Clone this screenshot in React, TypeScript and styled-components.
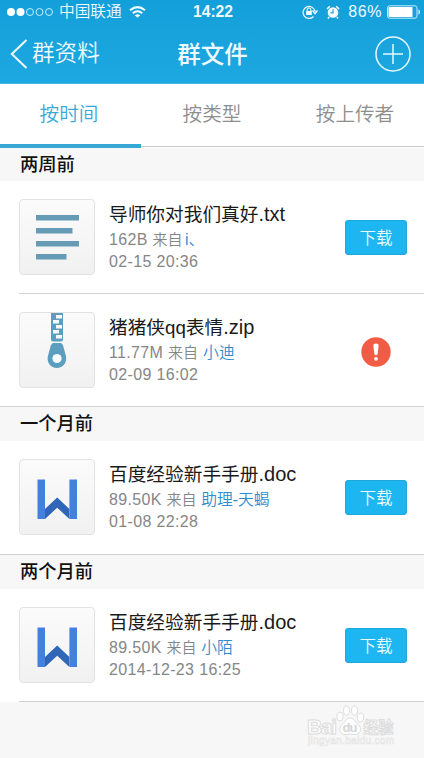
import React from "react";
import styled, { createGlobalStyle } from "styled-components";

const GlobalStyle = createGlobalStyle`
  * { box-sizing: border-box; }
  html, body { margin: 0; padding: 0; background: #f7f7f7; }
  body {
    font-family: "Liberation Sans", "Noto Sans CJK SC", sans-serif;
    -webkit-font-smoothing: antialiased;
  }
`;

const Screen = styled.div`
  position: relative;
  width: 424px;
  height: 758px;
  overflow: hidden;
  background: #f7f7f7;
  display: flex;
  flex-direction: column;
`;

const Header = styled.header`
  height: 84px;
  flex: none;
  color: #effaff;
  background: linear-gradient(#139fd9, #1ea8e1);
  border-bottom: 1px solid #45b5e2;
`;

const StatusBar = styled.div`
  height: 24px;
  display: grid;
  grid-template-columns: 1fr auto 1fr;
  align-items: center;
  padding: 0 3px 0 7px;
`;

const StatusGroup = styled.div<{ $end?: boolean }>`
  display: flex;
  align-items: center;
  justify-content: ${(p) => (p.$end ? "flex-end" : "flex-start")};
`;

const Carrier = styled.span`
  margin: 0 7px 0 6px;
  font-size: 15.7px;
  line-height: 24px;
  font-weight: 350;
`;

const Clock = styled.span`
  margin-right: 2px;
  font-size: 15.7px;
  line-height: 24px;
  font-weight: 700;
`;

const Percent = styled.span`
  margin: 0 5px 0 8px;
  font-size: 16px;
  line-height: 24px;
  letter-spacing: 0.6px;
`;

const NavBar = styled.div`
  height: 59px;
  display: grid;
  grid-template-columns: 1fr auto 1fr;
  align-items: center;
  padding: 0 13px 0 10px;
`;

const BackButton = styled.button`
  display: flex;
  align-items: center;
  gap: 4px;
  padding: 0;
  border: 0;
  background: none;
  color: inherit;
  font: 350 22.6px/32px "Liberation Sans", "Noto Sans CJK SC", sans-serif;
`;

const PageTitle = styled.h1`
  margin: 0;
  font-size: 23.5px;
  line-height: 34px;
  font-weight: 500;
  padding: 2px 0 0 4px;
`;

const AddButton = styled.button`
  justify-self: end;
  display: flex;
  padding: 0;
  border: 0;
  background: none;
  color: inherit;
`;

const Tabs = styled.nav`
  height: 64px;
  flex: none;
  display: grid;
  grid-template-columns: 141px 142px 1fr;
  background: #fff;
`;

const Tab = styled.button<{ $active?: boolean; $shift?: number }>`
  padding: ${(p) => (p.$active ? "0 3px 0 0" : "0 0 2px")};
  padding-left: ${(p) => p.$shift ?? 0}px;
  border: 0;
  border-bottom: ${(p) => (p.$active ? "4px solid #37a7d6" : "1px solid #c9c9c9")};
  margin-bottom: ${(p) => (p.$active ? "0" : "1px")};
  background: none;
  color: ${(p) => (p.$active ? "#38a9d8" : "#8e8e8e")};
  font: 350 19.6px/30px "Liberation Sans", "Noto Sans CJK SC", sans-serif;
`;

const SectionTitle = styled.h2<{ $height: number }>`
  flex: none;
  height: ${(p) => p.$height}px;
  margin: 0;
  padding-left: 20px;
  color: #111;
  background: #f7f7f7;
  font-size: 18.3px;
  line-height: 33px;
  font-weight: 500;
`;

const Row = styled.article<{ $height: number; $inset?: boolean }>`
  flex: none;
  height: ${(p) => p.$height}px;
  display: grid;
  grid-template-columns: 76px 1fr 62px;
  column-gap: 14px;
  padding: 18px 17px 0 19px;
  background:
    linear-gradient(#d2d2d2, #d2d2d2) ${(p) => (p.$inset ? "19px" : "0")} 100% / 100% 1px no-repeat,
    #fff;
`;

const FileTile = styled.div`
  width: 76px;
  height: 76px;
  border: 1px solid #e2e2e2;
  border-radius: 4px;
  overflow: hidden;
  background: linear-gradient(#fbfbfb, #f1f1f1);
  svg { display: block; margin: -1px; }
`;

const Info = styled.div`
  display: flex;
  flex-direction: column;
  white-space: nowrap;
`;

const FileName = styled.div`
  height: 30px;
  font-size: 18.7px;
  line-height: 31px;
  color: #1a1a1a;
`;

const Extension = styled.span`
  font-size: 20px;
`;

const Meta = styled.div`
  height: 22px;
  line-height: 22px;
  font-size: 16px;
  letter-spacing: 0.35px;
  color: #868686;
`;

const From = styled.span`
  font-size: 15px;
  font-weight: 350;
  letter-spacing: 0;
`;

const Sender = styled.span<{ $gap: number }>`
  margin-left: ${(p) => p.$gap}px;
  font-size: 15.8px;
  letter-spacing: 0;
  font-weight: 350;
  color: #2f8bd0;
`;

const Action = styled.div<{ $top: number }>`
  display: flex;
  justify-content: center;
  align-items: flex-start;
  padding-top: ${(p) => p.$top}px;
`;

const Download = styled.button`
  width: 62px;
  height: 35px;
  padding: 0;
  border: 0;
  border-radius: 4px;
  box-shadow: inset 0 0 0 1px #20a8de;
  background: #1eb6f1;
  color: #e8faff;
  font: 350 16.5px/34px "Liberation Sans", "Noto Sans CJK SC", sans-serif;
`;

const Watermark = styled.div`
  position: absolute;
  left: 305px;
  top: 703px;
  width: 92px;
  height: 44px;
  svg { display: block; }
`;

const TextIcon = () => (
  <svg width="76" height="76" viewBox="0 0 76 76" fill="#669bb5">
    <path d="M17 16h43v5.5H17zM17 29h36.5v5.5H17zM17 42h43v5.5H17zM17 55h30.5v5.5H17z" />
  </svg>
);

const ZipIcon = () => (
  <svg width="76" height="76" viewBox="0 0 76 76">
    <path d="M32 0h12v27.5q0 2-2 2h-8q-2 0-2-2z" fill="#5c9ebf" />
    <path d="M37 3h6v3.5h-6zM34 8h6v3.5h-6zM37 13h6v3.5h-6zM34 18h6v3.5h-6zM37 23h6v3.5h-6z" fill="#f8fcff" />
    <path d="M35.5 31h5c3 0 3.5 2 4.3 5l2.1 8c1.5 6.500-3 12-9 12s-10.500-5.500-9-12l2.200-8c.8-3 1.400-5 4.400-5z" fill="#5c9ebf" />
    <circle cx="38" cy="46.500" r="4.600" fill="#f8fbfd" />
  </svg>
);

const DocIcon = () => (
  <svg width="76" height="76" viewBox="0 0 76 76">
    <path d="M26 50 38.200 38.500 50.400 50v10L38.200 48.700 26 60z" fill="#2f66b8" />
    <path d="M18.500 20.500H26V60h-7.500zM50.400 20.500H58V60h-7.600z" fill="#4381dc" />
  </svg>
);

const Warning = () => (
  <svg width="30" height="30" viewBox="0 0 30 30" aria-label="warning">
    <circle cx="15" cy="15" r="14.700" fill="#f15c46" />
    <path d="M15 6.500c1.700 0 2.700.8 2.600 2.300l-.9 8.200c-.2 1.500-3.200 1.500-3.400 0l-.9-8.200c-.1-1.500.9-2.300 2.600-2.300z" fill="#fff" />
    <circle cx="15" cy="21.800" r="1.900" fill="#fff" />
  </svg>
);

const SignalDots = () => (
  <svg width="46" height="10" viewBox="0 0 46 10">
    {[4, 13.500, 23, 32.500, 42].map((cx, i) => (
      <circle key={cx} cx={cx} cy="5" r={i < 2 ? 4 : 3.500} fill={i < 2 ? "#fff" : "none"} stroke={i < 2 ? "none" : "#c9ecfa"} />
    ))}
  </svg>
);

const WifiIcon = () => (
  <svg width="17" height="12" viewBox="0 0 17 12" fill="none" stroke="#f2fbff" strokeWidth="2">
    <path d="M1 4.300Q8.500-2 16 4.300M3.700 7.200q4.800-4 9.600 0" />
    <path d="M8.500 11.800 5.700 9.200q2.800-2 5.600 0z" fill="#f2fbff" stroke="none" />
  </svg>
);

const LockIcon = () => (
  <svg width="16" height="14" viewBox="0 0 16 14" fill="none" stroke="#eaf9ff" strokeWidth="1.200">
    <path d="M11.500 11.500A6 6 0 1 1 13 6.500M10.800 6h4.400L13 8.700z" />
    <path d="M5.200 6V4.800a1.800 1.800 0 0 1 3.600 0V6" />
    <path d="M4.200 6h5.600v4H4.200z" fill="#fff" stroke="none" />
  </svg>
);

const AlarmIcon = () => (
  <svg width="14" height="14" viewBox="0 0 14 14">
    <circle cx="7" cy="7.500" r="5.300" fill="#f6fdff" />
    <path d="M1 4 3.800 1.300M13 4l-2.800-2.700M3 12l-1 1.500M11 12l1 1.500" stroke="#f6fdff" strokeWidth="1.500" />
    <path d="M7 4.300v3.500H4.500" fill="none" stroke="#229fd3" strokeWidth="1.200" />
  </svg>
);

const BatteryIcon = () => (
  <svg width="34" height="14" viewBox="0 0 34 14">
    <rect x=".5" y=".8" width="29.500" height="12.400" rx="2" fill="none" stroke="#c6ecfa" />
    <rect x="1.500" y="2" width="24" height="10" rx=".7" fill="#fff" />
    <path d="M31.500 4.500c2 .5 2 4.500 0 5z" fill="#eaf9ff" />
  </svg>
);

const BaiduMark = () => (
  <svg width="92" height="44" viewBox="0 0 92 44" fontFamily='"Liberation Sans", "Noto Sans CJK SC", sans-serif'>
    <g fill="#fff" stroke="#dcdcdc" strokeWidth="1">
      <ellipse cx="35" cy="13.500" rx="3" ry="4.300" />
      <ellipse cx="41.500" cy="7.500" rx="3" ry="4.500" />
      <ellipse cx="49.500" cy="7.500" rx="3" ry="4.500" />
      <ellipse cx="55.500" cy="14.500" rx="3.200" ry="4.300" />
      <path d="M45 15c4 0 5 4 8 6.500 5 4 2 11-4 10-3-.7-5-.7-8 0-6 1-8-6-4-10 3-2.500 4-6.500 8-6.500z" />
      <text x="2" y="31" fontSize="21" fontWeight="700" textLength="30">Bai</text>
      <text x="58.500" y="30" fontSize="16" fontWeight="700" textLength="30" lengthAdjust="spacingAndGlyphs">经验</text>
    </g>
    <text x="37.500" y="29" fontSize="13" fontWeight="700" textLength="15" fill="#d5d5d5">du</text>
    <text x="3" y="41" fontSize="10" textLength="86" fill="#fff" stroke="#e4e4e4" strokeWidth=".6">jingyan.baidu.com</text>
  </svg>
);

type FileEntry = {
  kind: "text" | "zip" | "doc";
  name: string;
  ext: string;
  size: string;
  sender: string;
  gap: number;
  time: string;
  height: number;
  inset?: boolean;
  failed?: boolean;
};

const sections: { title: string; height: number; files: FileEntry[] }[] = [
  {
    title: "两周前",
    height: 33,
    files: [
      { kind: "text", name: "导师你对我们真好", ext: ".txt", size: "162B", sender: "i、", gap: 2.5, time: "02-15 20:36", height: 113, inset: true },
      { kind: "zip", name: "猪猪侠qq表情", ext: ".zip", size: "11.77M", sender: "小迪", gap: 5, time: "02-09 16:02", height: 113, failed: true },
    ],
  },
  {
    title: "一个月前",
    height: 34,
    files: [{ kind: "doc", name: "百度经验新手手册", ext: ".doc", size: "89.50K", sender: "助理-天蝎", gap: 4.5, time: "01-08 22:28", height: 114 }],
  },
  {
    title: "两个月前",
    height: 34,
    files: [{ kind: "doc", name: "百度经验新手手册", ext: ".doc", size: "89.50K", sender: "小陌", gap: 4.5, time: "2014-12-23 16:25", height: 113, inset: true }],
  },
];

const icons = { text: TextIcon, zip: ZipIcon, doc: DocIcon };

const FileRow = ({ file }: { file: FileEntry }) => {
  const Icon = icons[file.kind];
  return (
    <Row $height={file.height} $inset={file.inset}>
      <FileTile><Icon /></FileTile>
      <Info>
        <FileName>{file.name}<Extension>{file.ext}</Extension></FileName>
        <Meta>
          {file.size} <From>来自</From>
          <Sender $gap={file.gap}>{file.sender}</Sender>
        </Meta>
        <Meta>{file.time}</Meta>
      </Info>
      <Action $top={file.failed ? 25 : 21}>{file.failed ? <Warning /> : <Download>下载</Download>}</Action>
    </Row>
  );
};

export default function App() {
  return (
    <Screen lang="zh-CN">
      <GlobalStyle />
      <Header>
        <StatusBar>
          <StatusGroup>
            <SignalDots />
            <Carrier>中国联通</Carrier>
            <WifiIcon />
          </StatusGroup>
          <Clock>14:22</Clock>
          <StatusGroup $end>
            <LockIcon />
            <svg width="8" height="1" />
            <AlarmIcon />
            <Percent>86%</Percent>
            <BatteryIcon />
          </StatusGroup>
        </StatusBar>
        <NavBar>
          <BackButton>
            <svg width="18" height="30" viewBox="0 0 18 30" fill="none" stroke="#effaff" strokeWidth="2">
              <path d="M16.500 1 1.800 15l14.700 14" />
            </svg>
            群资料
          </BackButton>
          <PageTitle>群文件</PageTitle>
          <AddButton aria-label="add">
            <svg width="36" height="36" viewBox="0 0 36 36" fill="none" stroke="#e6f8ff" strokeWidth="1.500">
              <circle cx="18" cy="18" r="17" />
              <path d="M18 8v20M8 18h20" />
            </svg>
          </AddButton>
        </NavBar>
      </Header>
      <Tabs>
        <Tab $active>按时间</Tab>
        <Tab>按类型</Tab>
        <Tab $shift={3}>按上传者</Tab>
      </Tabs>
      {sections.map((s) => (
        <React.Fragment key={s.title}>
          <SectionTitle $height={s.height}>{s.title}</SectionTitle>
          {s.files.map((f) => <FileRow key={f.time} file={f} />)}
        </React.Fragment>
      ))}
      <Watermark><BaiduMark /></Watermark>
    </Screen>
  );
}
